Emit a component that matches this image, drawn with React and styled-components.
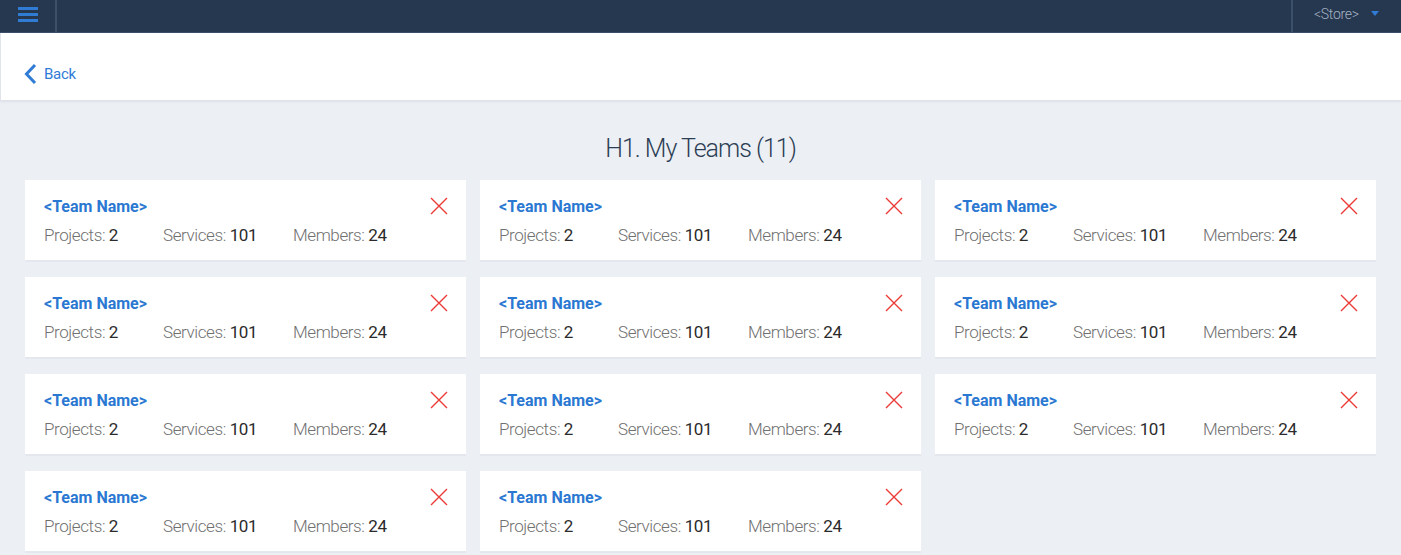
import React from "react";
import styled, { createGlobalStyle } from "styled-components";

const GlobalStyle = createGlobalStyle`
  * { box-sizing: border-box; }
  body {
    margin: 0;
    background: #eceff4;
    font-family: Roboto, "Liberation Sans", sans-serif;
  }
`;

const teams = Array.from({ length: 11 }, (_, i) => ({
  id: i,
  name: "<Team Name>",
  projects: 2,
  services: 101,
  members: 24,
}));

const App = () => {
  return (
    <Page>
      <GlobalStyle />
      <TopBar>
        <MenuButton>
          <svg width="20" height="15" viewBox="0 0 20 15">
            <rect x="0" y="0" width="20" height="3" fill="#2f7bd6" />
            <rect x="0" y="6" width="20" height="3" fill="#2f7bd6" />
            <rect x="0" y="12" width="20" height="3" fill="#2f7bd6" />
          </svg>
        </MenuButton>
        <Spacer />
        <StoreSelect>
          &lt;Store&gt;
          <Caret />
        </StoreSelect>
      </TopBar>
      <SubHeader>
        <BackLink href="#">
          <svg width="14" height="22" viewBox="0 0 14 22">
            <path
              d="M11 2 L2.5 11 L11 20"
              fill="none"
              stroke="#2f7bd6"
              strokeWidth="3"
            />
          </svg>
          Back
        </BackLink>
      </SubHeader>
      <Content>
        <Title>H1. My Teams (11)</Title>
        <Grid>
          {teams.map((team) => (
            <Card key={team.id}>
              <CardTop>
                <TeamName>{team.name}</TeamName>
                <RemoveButton aria-label="Remove team">
                  <svg width="18" height="18" viewBox="0 0 18 18">
                    <path
                      d="M1 1 L17 17 M17 1 L1 17"
                      stroke="#ea3b36"
                      strokeWidth="1.4"
                    />
                  </svg>
                </RemoveButton>
              </CardTop>
              <Stats>
                <Stat width="119px">
                  Projects: <b>{team.projects}</b>
                </Stat>
                <Stat width="130px">
                  Services: <b>{team.services}</b>
                </Stat>
                <Stat>
                  Members: <b>{team.members}</b>
                </Stat>
              </Stats>
            </Card>
          ))}
        </Grid>
      </Content>
    </Page>
  );
};

const Page = styled.div`
  min-height: 100vh;
`;

const TopBar = styled.div`
  display: flex;
  align-items: stretch;
  height: 33px;
  background: #263850;
  border-bottom: 1px solid #3b4e68;
`;

const MenuButton = styled.div`
  display: flex;
  align-items: center;
  justify-content: center;
  width: 57px;
  padding-bottom: 4px;
  border-right: 2px solid #3d5069;
`;

const Spacer = styled.div`
  flex: 1;
`;

const StoreSelect = styled.div`
  display: flex;
  align-items: center;
  gap: 8px;
  width: 110px;
  padding-left: 21px;
  padding-bottom: 5px;
  border-left: 2px solid #3d5069;
  color: #a7b3c4;
  font-size: 14px;
  font-weight: 300;
  letter-spacing: -0.3px;
`;

const Caret = styled.span`
  width: 0;
  height: 0;
  border-left: 4px solid transparent;
  border-right: 4px solid transparent;
  border-top: 5px solid #2f7bd6;
  margin-left: 4px;
`;

const SubHeader = styled.div`
  display: flex;
  align-items: center;
  height: 67px;
  padding-left: 23px;
  padding-top: 14px;
  background: #ffffff;
  border-left: 1px solid #e0e4ea;
  box-shadow: 0 2px 2px #dde1e7;
`;

const BackLink = styled.a`
  display: flex;
  align-items: center;
  gap: 6px;
  color: #2f7bd6;
  font-size: 15px;
  letter-spacing: -0.3px;
  text-decoration: none;
`;

const Content = styled.div`
  padding: 0 25px 2px;
`;

const Title = styled.h1`
  margin: 31px 0 13px;
  text-align: center;
  color: #2c3e55;
  font-size: 25px;
  font-weight: 300;
  letter-spacing: -1px;
  line-height: 36px;
`;

const Grid = styled.div`
  display: grid;
  grid-template-columns: repeat(3, 1fr);
  column-gap: 14px;
  row-gap: 15px;
`;

const Card = styled.div`
  height: 82px;
  padding: 15px 18px 0 19px;
  background: #ffffff;
  border-bottom: 2px solid #e4e8ee;
`;

const CardTop = styled.div`
  display: flex;
  justify-content: space-between;
  align-items: center;
  height: 22px;
`;

const TeamName = styled.div`
  color: #2a78d2;
  font-size: 16px;
  font-weight: 700;
`;

const RemoveButton = styled.button`
  display: flex;
  padding: 0;
  border: none;
  background: none;
  cursor: pointer;
`;

const Stats = styled.div`
  display: flex;
  margin-top: 8px;
`;

const Stat = styled.div`
  width: ${(p) => p.width || "auto"};
  color: #707070;
  font-size: 17px;
  font-weight: 300;
  letter-spacing: -0.4px;

  b {
    color: #2b2b2b;
    font-weight: 400;
  }
`;

export default App;
